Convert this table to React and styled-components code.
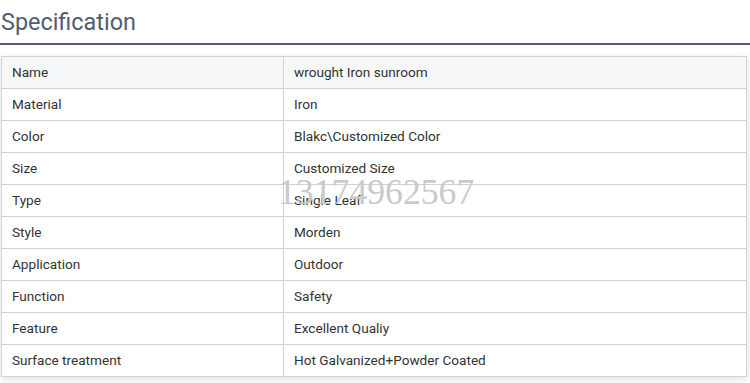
import React from "react";
import styled, { createGlobalStyle } from "styled-components";

const GlobalStyle = createGlobalStyle`
    body {
        margin: 0;
        background: #ffffff;
        font-family: Roboto, "Liberation Sans", Arial, sans-serif;
    }
`;

const specs = [
    ["Name", "wrought Iron sunroom"],
    ["Material", "Iron"],
    ["Color", "Blakc\\Customized Color"],
    ["Size", "Customized Size"],
    ["Type", "Single Leaf"],
    ["Style", "Morden"],
    ["Application", "Outdoor"],
    ["Function", "Safety"],
    ["Feature", "Excellent Qualiy"],
    ["Surface treatment", "Hot Galvanized+Powder Coated"],
];

function App() {
    return (
        <React.Fragment>
            <GlobalStyle />
            <Wrapper>
                <Title>Specification</Title>
                <TableBox>
                    <Table>
                        <tbody>
                            {specs.map(([key, value], i) => (
                                <Row key={key} head={i === 0}>
                                    <KeyCell>{key}</KeyCell>
                                    <Cell>{value}</Cell>
                                </Row>
                            ))}
                        </tbody>
                    </Table>
                    <Watermark>13174962567</Watermark>
                </TableBox>
            </Wrapper>
        </React.Fragment>
    );
}

export default App;

const Wrapper = styled.div`
    width: 750px;
    height: 383px;
    overflow: hidden;
`;

const Title = styled.h2`
    margin: 0;
    padding: 7px 0 0 1px;
    height: 36px;
    font-size: 23.4px;
    font-weight: 400;
    line-height: 30px;
    color: #4e5d76;
    border-bottom: 2px solid #535d70;
`;

const TableBox = styled.div`
    position: relative;
    margin: 11px 3px 0 1px;
    box-shadow: 0 2px 8px rgba(0, 0, 0, 0.12);
`;

const Table = styled.table`
    width: 100%;
    border-collapse: collapse;
    border: 1px solid #d2d2d2;
`;

const Row = styled.tr`
    height: 32px;
    background: ${(p) => (p.head ? "#f6f7f9" : "#ffffff")};
`;

const Cell = styled.td`
    padding: 0 10px 1px;
    border: 1px solid #d2d2d2;
    font-size: 13.6px;
    color: #333333;
    line-height: 29px;
`;

const KeyCell = styled(Cell)`
    width: 261px;
`;

const Watermark = styled.div`
    position: absolute;
    left: 277px;
    top: 116px;
    font-family: "Liberation Serif", "Times New Roman", serif;
    font-size: 35.7px;
    line-height: 40px;
    color: #cacaca;
    pointer-events: none;
`;
